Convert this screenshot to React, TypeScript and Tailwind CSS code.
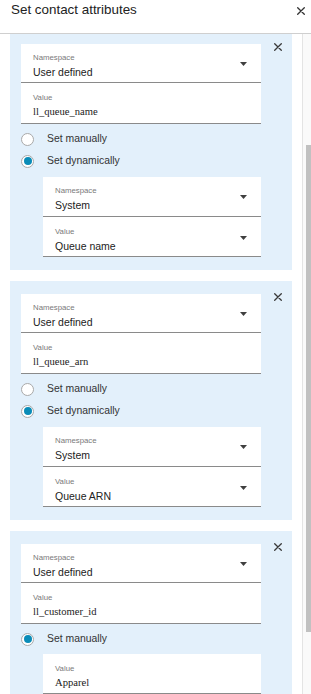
import React from 'react'

function Caret() {
  return (
    <svg width="7" height="4" viewBox="0 0 7 4" className="shrink-0">
      <path d="M0 0 H7 L3.5 4 Z" fill="#3f3f3f" />
    </svg>
  )
}

function Cross({ size = 8, color = '#333' }: { size?: number; color?: string }) {
  return (
    <svg width={size} height={size} viewBox="0 0 8 8">
      <path d="M0.7 0.7 L7.3 7.3 M7.3 0.7 L0.7 7.3" stroke={color} strokeWidth="1.3" strokeLinecap="round" />
    </svg>
  )
}

function Select({ label, value, h = 'h-[39px]', pt = 'pt-[9px]' }: { label: string; value: string; h?: string; pt?: string }) {
  return (
    <div className={`${h} ${pt} pl-[12px] pr-[14px] bg-white border-b border-[#8a8a8a] flex items-start`}>
      <div className="flex-1">
        <div className="text-[7.8px] leading-[9px] text-[#7a7a7a]">{label}</div>
        <div className="mt-[2px] text-[10.5px] leading-[16px] text-[#222]">{value}</div>
      </div>
      <div className="pt-[8.5px]">
        <Caret />
      </div>
    </div>
  )
}

function Input({ label, value, h = 'h-[41px]' }: { label: string; value: string; h?: string }) {
  return (
    <div className={`${h} pt-[10px] pl-[12px] bg-white border-b border-[#8a8a8a]`}>
      <div className="text-[7.8px] leading-[9px] text-[#7a7a7a]">{label}</div>
      <div className="mt-[2px] text-[10.6px] leading-[16px] text-[#222] font-['Liberation_Serif',serif]">{value}</div>
    </div>
  )
}

function Radio({ label, checked }: { label: string; checked?: boolean }) {
  return (
    <div className="h-[22px] flex items-center pl-[11px]">
      <div className="w-[13px] h-[13px] rounded-full border border-[#a9a9a9] bg-white flex items-center justify-center">
        {checked && <div className="w-[8px] h-[8px] rounded-full bg-[#0a8cb8]" />}
      </div>
      <span className="ml-[13px] text-[10.4px] text-[#333]">{label}</span>
    </div>
  )
}

function CardHead({ name }: { name: string }) {
  return (
    <div className="flex">
      <div className="ml-[11px] w-[240px]">
        <Select label="Namespace" value="User defined" />
        <Input label="Value" value={name} />
      </div>
      <div className="flex-1 flex justify-center">
        <div className="-mt-[1px] ml-[2px]">
          <Cross size={8} color="#3a3a3a" />
        </div>
      </div>
    </div>
  )
}

function DynamicCard({ name, valueLabel }: { name: string; valueLabel: string }) {
  return (
    <div className="bg-[#e3f0fb] pt-[13px] pb-[13px] mb-[11px]">
      <CardHead name={name} />
      <div className="mt-[4px]">
        <Radio label="Set manually" />
        <Radio label="Set dynamically" checked />
      </div>
      <div className="mt-[5px] ml-[33px] w-[218px]">
        <Select label="Namespace" value="System" h="h-[40px]" />
        <Select label="Value" value={valueLabel} h="h-[40px]" pt="pt-[10px]" />
      </div>
    </div>
  )
}

export default function App() {
  return (
    <div className="w-[311px] h-[694px] overflow-hidden bg-white font-['Liberation_Sans',Arial,sans-serif] flex flex-col">
      <div className="h-[34px] shrink-0 border-b border-[#cfcfcf] flex items-start justify-between pl-[11px] pr-[6px]">
        <div className="text-[13.4px] leading-[20px] text-[#222]">Set contact attributes</div>
        <div className="mt-[7px]">
          <Cross size={8} color="#333" />
        </div>
      </div>
      <div className="flex-1 flex overflow-hidden">
        <div className="w-[302px] overflow-hidden px-[10px]">
          <div className="-mt-[3px]">
            <DynamicCard name="ll_queue_name" valueLabel="Queue name" />
            <DynamicCard name="ll_queue_arn" valueLabel="Queue ARN" />
            <div className="bg-[#e3f0fb] pt-[13px] pb-[13px]">
              <CardHead name="ll_customer_id" />
              <div className="mt-[4px]">
                <Radio label="Set manually" checked />
              </div>
              <div className="mt-[4px] ml-[33px] w-[218px]">
                <Input label="Value" value="Apparel" h="h-[40px]" />
              </div>
            </div>
          </div>
        </div>
        <div className="w-[9px] border-l border-[#e4e4e4] bg-[#fafafa] pt-[111px]">
          <div className="ml-[3px] w-[5px] h-[487px] bg-[#c1c1c1]" />
        </div>
      </div>
    </div>
  )
}
